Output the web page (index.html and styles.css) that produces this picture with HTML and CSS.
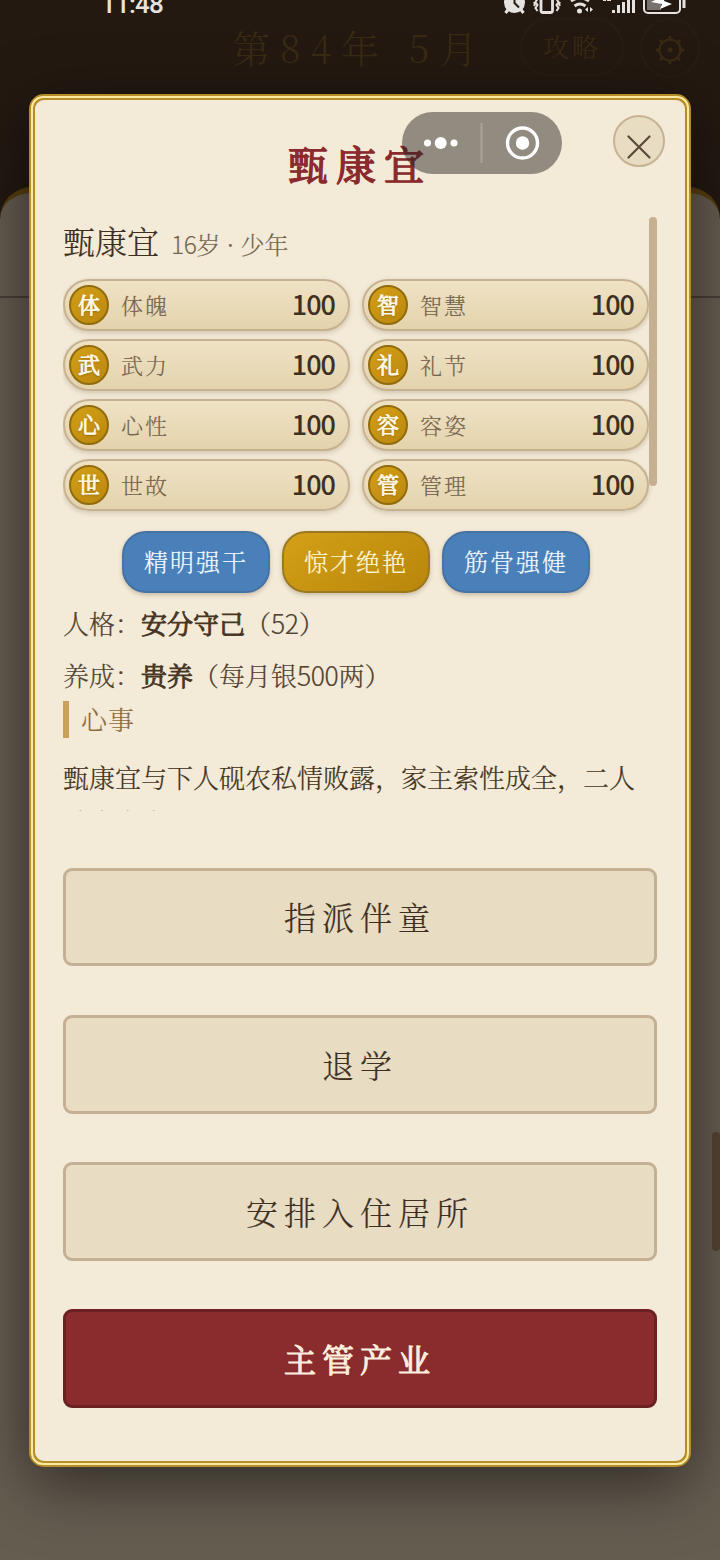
FILE: index.html
```html
<!DOCTYPE html>
<html lang="zh-CN">
<head>
<meta charset="utf-8">
<title>甄康宜</title>
<link rel="stylesheet" href="styles.css">
</head>
<body>
<div class="screen">
  <header class="topbar">
    <span class="date">第84年 5月</span>
    <span class="guide">攻略</span>
    <span class="gear"><svg width="32" height="32" viewBox="0 0 32 32" fill="none" stroke="currentColor"><circle cx="16" cy="16" r="10.500" stroke-width="2.200"/><circle cx="16" cy="16" r="2.500" fill="currentColor" stroke="none"/><path d="M16 2v4M16 26v4M2 16h4M26 16h4M6 6l3 3M23 23l3 3M6 26l3-3M23 9l3-3" stroke-width="2.800"/></svg></span>
  </header>
  <div class="sheet"><div class="sheet-head"></div><i class="page-scroll"></i></div>
  <div class="status">
    <span class="clock">11:48</span>
    <svg class="status-icons" width="190" height="16" viewBox="500 0 190 16" fill="none" stroke="#e5e2df">
      <circle cx="514.500" cy="2.500" r="10.500" fill="#e5e2df" stroke="none"/><path d="M505.500 13l3-4M523.500 13l-3-4" stroke-width="3"/><path d="M514.500 -3v6l4.500 4.500" stroke="#231a13" stroke-width="2"/>
      <rect x="541" y="-8" width="11.500" height="20.500" rx="2" stroke-width="2.800"/><path d="M537.500 -1l-2 3 2 3-2 3 2 3M556.500 -1l2 3-2 3 2 3-2 3M534 2l1 2-1 2M560 2l-1 2 1 2" stroke-width="2"/>
      <path d="M571 1q9-6 18 0M574.500 6q5.500-4 11 0" stroke-width="2.800"/><circle cx="579.500" cy="11" r="2.500" fill="#e5e2df" stroke="none"/><path d="M588 7v5l-3-2.500zM590 7v5l3-2.500z" fill="#e5e2df" stroke="none"/>
      <path d="M603 0h3M607 0h4" stroke-width="2"/><path d="M613.500 13v-3M618.500 13V5M623.500 13V2M628.500 13V-2M633.500 13V-4" stroke-width="3"/>
      <rect x="647" y="-8" width="14" height="18" fill="#77726d" stroke="none"/><rect x="644" y="-10" width="36" height="23" rx="4" stroke-width="2"/><path d="M684 0v8" stroke-width="3"/><path d="M651 2L662 -3h3l-1 4 8 3-12 5 2-5z" fill="#fff" stroke="none"/>
    </svg>
  </div>
  <main class="modal">
    <h1>甄康宜</h1>
    <button class="close" aria-label="关闭"><svg width="24" height="24" viewBox="0 0 24 24"><path d="M1.500 1.500l21 21M22.500 1.500l-21 21" stroke="#5c4a38" stroke-width="2.200" stroke-linecap="round"/></svg></button>
    <section class="scroll">
      <div class="content">
        <div class="person"><span class="name">甄康宜</span><span class="age"><span class="num">16</span>岁 · 少年</span></div>
        <div class="stats">
          <div class="stat"><b class="badge">体</b><span>体魄</span><strong>100</strong></div>
          <div class="stat"><b class="badge">智</b><span>智慧</span><strong>100</strong></div>
          <div class="stat"><b class="badge">武</b><span>武力</span><strong>100</strong></div>
          <div class="stat"><b class="badge">礼</b><span>礼节</span><strong>100</strong></div>
          <div class="stat"><b class="badge">心</b><span>心性</span><strong>100</strong></div>
          <div class="stat"><b class="badge">容</b><span>容姿</span><strong>100</strong></div>
          <div class="stat"><b class="badge">世</b><span>世故</span><strong>100</strong></div>
          <div class="stat"><b class="badge">管</b><span>管理</span><strong>100</strong></div>
        </div>
        <div class="tags"><span class="tag">精明强干</span><span class="tag gold">惊才绝艳</span><span class="tag">筋骨强健</span></div>
        <p class="row">人格：<b>安分守己</b>（<span class="num">52</span>）</p>
        <p class="row">养成：<b>贵养</b>（每月银<span class="num">500</span>两）</p>
        <h2>心事</h2>
        <p class="story">甄康宜与下人砚农私情败露，家主索性成全，二人结为夫妻。</p>
      </div>
      <i class="thumb"></i>
    </section>
    <div class="actions">
      <button>指派伴童</button>
      <button>退学</button>
      <button>安排入住居所</button>
      <button class="primary">主管产业</button>
    </div>
  </main>
  <div class="capsule"><svg width="160" height="62" viewBox="0 0 160 62"><g fill="#fff"><circle cx="25.500" cy="31" r="3.500"/><circle cx="38.700" cy="31" r="6"/><circle cx="52" cy="31" r="3.500"/><circle cx="120.500" cy="31" r="6.700"/></g><circle cx="120.500" cy="31" r="15" fill="none" stroke="#fff" stroke-width="3.400"/><path d="M79.500 11v40" stroke="#aaa39b" stroke-width="2"/></svg></div>
</div>
</body>
</html>
```
FILE: styles.css
```css
* { box-sizing: border-box; }
body { margin: 0; font-family: "Noto Serif CJK SC", "Noto Serif SC", "Source Han Serif SC", "Noto Sans CJK SC", serif; color: #3d2f22; }
h1, h2, p { margin: 0; }
button { font: inherit; color: inherit; margin: 0; padding: 0; }
.screen { position: relative; width: 720px; height: 1560px; overflow: hidden; background: #231911; display: flex; flex-direction: column; }
.topbar { height: 187px; flex: none; padding: 18px 20px 0 232px; display: flex; align-items: flex-start; color: #3a2a14; }
.date { width: 288px; font-size: 38px; line-height: 58px; letter-spacing: 9.800px; white-space: nowrap; font-weight: 300; }
.guide { width: 104px; height: 58px; border: 2px solid #281d15; border-radius: 29px; text-align: center; font-size: 26px; line-height: 52px; letter-spacing: 3px; font-weight: 300; }
.gear { width: 60px; height: 60px; margin-left: 16px; border: 2px solid #281d15; border-radius: 50%; display: flex; align-items: center; justify-content: center; padding-top: 4px; }
.sheet { flex: 1; position: relative; border-top: 6px solid #593f10; border-radius: 32px 32px 0 0; background: #665d51; }
.sheet-head { height: 105px; border-bottom: 2px solid #484038; }
.page-scroll { position: absolute; right: 0; top: 939px; width: 8px; height: 119px; border-radius: 4px; background: #544333; }
.status { position: absolute; left: 0; top: 0; width: 720px; height: 16px; overflow: hidden; }
.clock { position: absolute; left: 101px; top: -12px; font: 500 26px/32px Roboto, sans-serif; letter-spacing: -.800px; color: #e5e2df; }
.status-icons { position: absolute; left: 500px; top: 0; }
.modal { position: absolute; left: 29px; top: 94px; width: 662px; height: 1373px; padding: 33px 28px 0; display: flex; flex-direction: column; border: 6px solid #b58e28; border-radius: 15px; background: #f3ead8; box-shadow: 0 16px 64px rgba(0,0,0,.55); }
.modal::before { content: ""; position: absolute; inset: -4px; border: 2px solid #fae9a0; border-radius: 12px; pointer-events: none; }
h1 { height: 60px; line-height: 60px; font-size: 40px; font-weight: 400; -webkit-text-stroke: 1.400px currentColor; letter-spacing: 8px; text-align: center; color: #8b2a2e; }
.close { position: absolute; right: 20px; top: 15px; width: 52px; height: 52px; border: 2px solid #c7b394; border-radius: 50%; background: #e8dcc3; display: flex; align-items: center; justify-content: center; padding-top: 11px; }
.scroll { margin-top: 24px; height: 594px; flex: none; overflow: hidden; display: flex; }
.content { width: 586px; }
.thumb { flex: none; width: 8px; height: 269px; border-radius: 4px; background: #c5b091; }
.num { font-family: "Noto Sans CJK SC", sans-serif; font-size: 1.020em; font-weight: 300; letter-spacing: -.400px; line-height: 1; }
.person { height: 62px; padding-top: 1px; display: flex; align-items: baseline; line-height: 44px; }
.name { font-size: 32px; font-weight: 300; -webkit-text-stroke: .200px currentColor; }
.age { margin-left: 12px; font-size: 24px; color: #75654f; font-weight: 300; -webkit-text-stroke: .150px currentColor; }
.stats { display: grid; grid-template-columns: 287px 287px; gap: 8px 12px; }
.stat { height: 52px; border: 2px solid #c6b191; border-radius: 26px; padding: 0 13px 0 4px; display: flex; align-items: center; background: linear-gradient(#efe2c5, #e4d3ac); box-shadow: 0 2px 5px rgba(80,55,20,.2); }
.badge { width: 40px; height: 40px; flex: none; border: 2px solid #916c0d; border-radius: 50%; text-align: center; font-size: 22px; font-weight: 400; -webkit-text-stroke: .900px currentColor; line-height: 34px; background: linear-gradient(145deg, #d4a017, #ba8710); color: #fff8e6; text-shadow: 0 1px 2px rgba(60,35,0,.5); }
.stat span { margin-left: 12px; flex: 1; font-size: 22px; line-height: 48px; letter-spacing: 2px; color: #75644e; font-weight: 300; -webkit-text-stroke: .150px currentColor; }
.stat strong { font: 500 27px/46px "Noto Sans CJK SC", sans-serif; padding-bottom: 2px; letter-spacing: -1px; }
.tags { margin-top: 20px; display: flex; justify-content: center; gap: 12px; }
.tag { width: 148px; height: 62px; border: 2px solid #4673a4; border-radius: 24px; background: #4a80b9; color: #f3faff; text-align: center; font-size: 24px; line-height: 55px; letter-spacing: 2px; font-weight: 300; -webkit-text-stroke: .200px currentColor; box-shadow: 0 2px 4px rgba(70,50,20,.25); }
.tag.gold { background: linear-gradient(145deg, #d4a017, #b8860b); border-color: #9c7820; color: #fff7d8; }
.row { height: 52px; line-height: 51px; font-size: 26px; font-weight: 300; -webkit-text-stroke: .200px currentColor; color: #514231; }
.tags + .row { margin-top: 4px; }
.row b { font-weight: 400; -webkit-text-stroke: .900px currentColor; color: #473523; }
h2 { height: 37px; border-left: 6px solid #c9a15a; padding-left: 12px; font-size: 26px; line-height: 36px; letter-spacing: 1px; font-weight: 300; -webkit-text-stroke: .200px currentColor; color: #8d6c3b; }
.story { width: 594px; margin-top: 16px; font-size: 26px; line-height: 45px; font-weight: 300; -webkit-text-stroke: .200px currentColor; color: #433420; }
.actions { margin-top: 56.500px; display: grid; gap: 48.500px; }
.actions button { height: 98.800px; border: 3px solid #c4b092; border-radius: 9px; padding-bottom: 1px; background: #e8dcc2; font-size: 32px; font-weight: 300; -webkit-text-stroke: .200px currentColor; letter-spacing: 6px; line-height: 44px; }
.actions .primary { background: #8a2c2d; border-color: #6b2022; color: #fbeedd; font-weight: 400; -webkit-text-stroke: 1.100px currentColor; }
.capsule { position: absolute; left: 402px; top: 112px; width: 160px; height: 62px; border-radius: 31px; background: rgba(40,35,31,.48); }
.capsule svg { display: block; }
```
